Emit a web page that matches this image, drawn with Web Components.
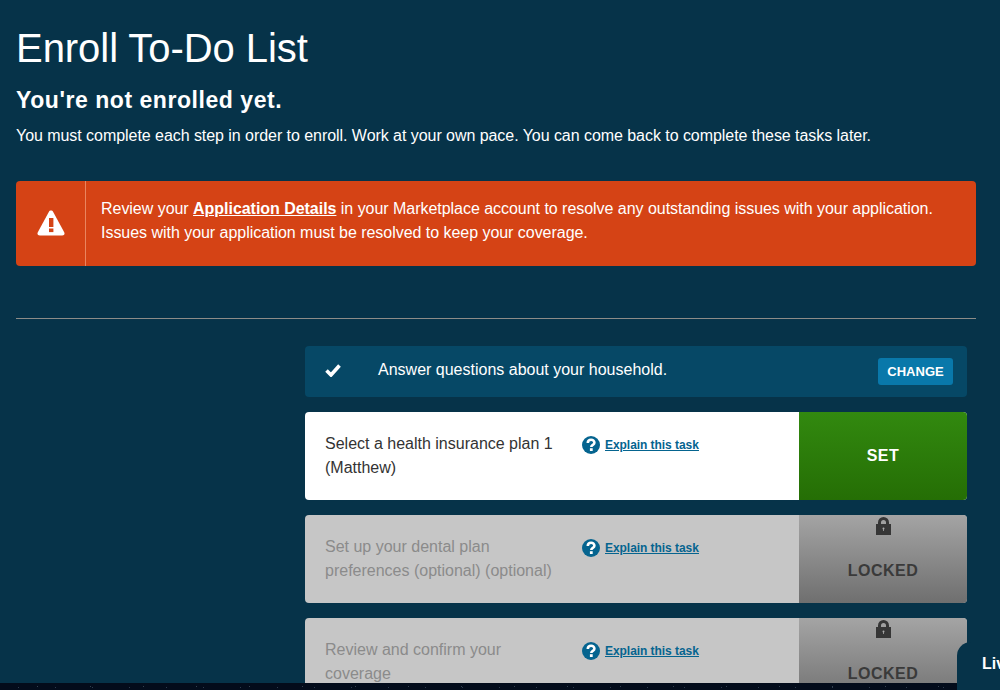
<!DOCTYPE html>
<html lang="en">
<head>
<meta charset="utf-8">
<title>Enroll To-Do List</title>
<style>
  html, body { margin: 0; height: 100%; overflow: hidden; background: #063349; }
  body { font-family: 'Liberation Sans', Arial, sans-serif; color: #fff; }
</style>
</head>
<body>
<enroll-page>
  <todo-row state="done" label="Answer questions about your household."></todo-row>
  <todo-row state="set" label="Select a health insurance plan 1 (Matthew)"></todo-row>
  <todo-row state="locked" label="Set up your dental plan preferences (optional) (optional)"></todo-row>
  <todo-row state="locked" label="Review and confirm your coverage"></todo-row>
</enroll-page>
<script>
// Alert banner
class AlertBanner extends HTMLElement {
  constructor() {
    super();
    this.attachShadow( {mode: 'open'} );
    this.shadowRoot.innerHTML = /* template */ `
      <style>
        :host {
          background: #d54315;
          border-radius: 4px;
          box-sizing: border-box;
          display: flex;
          height: 85px;
        }
        div[part=icon] {
          align-items: center;
          border-right: solid 1px #e9855f;
          box-sizing: border-box;
          display: flex;
          flex: none;
          justify-content: center;
          padding: 0 0 2px 0;
          width: 70px;
        }
        p {
          font-size: 16px;
          letter-spacing: -0.035px;
          line-height: 24px;
          margin: 0;
          padding: 16px 15px 0 15px;
        }
        ::slotted( a ) {
          color: #fff;
          font-weight: bold;
        }
      </style>
      <div part="icon">
        <svg width="28" height="26" viewBox="0 0 28 26">
          <path d="M14 0.5c1 0 1.700 .5 2.200 1.400l11 20.400c.9 1.700 -.1 3.200 -2 3.200H2.800c-1.900 0 -2.900 -1.500 -2 -3.200l11 -20.400C12.300 1 13 .5 14 .5z" fill="#fff"/>
          <rect x="12" y="8" width="4.400" height="9" fill="#d54315"/>
          <rect x="12" y="18.500" width="4.400" height="3.600" fill="#d54315"/>
        </svg>
      </div>
      <p><slot></slot></p>
    `;
  }
}
window.customElements.define( 'alert-banner', AlertBanner );

// One step of the to-do list
class TodoRow extends HTMLElement {
  constructor() {
    super();
    this.attachShadow( {mode: 'open'} );
    this.shadowRoot.innerHTML = /* template */ `
      <style>
        :host {
          border-radius: 4px;
          display: flex;
          flex: none;
          font-size: 16px;
          height: 88px;
          overflow: hidden;
        }
        :host( [state=done] ) {
          align-items: center;
          background: #064866;
          height: 51px;
        }
        :host( [state=set] ) {
          background: #fff;
          color: #333;
        }
        :host( [state=locked] ) {
          background: #c6c6c6;
          color: #8b8b8b;
        }
        svg[part=check] {
          margin: 0 0 3px 20px;
        }
        p {
          line-height: 24px;
          margin: 0;
        }
        :host( [state=done] ) p {
          flex-grow: 1;
          margin: 0 0 0 37px;
          padding: 0 0 4px 0;
        }
        :host( :not( [state=done] ) ) p {
          box-sizing: border-box;
          padding: 20px 22px 0 20px;
          width: 277px;
        }
        button {
          background: #0978aa;
          border: none;
          border-radius: 3px;
          color: #fff;
          font-family: inherit;
          font-size: 13px;
          font-weight: bold;
          height: 27px;
          margin: 0 14px 0 0;
          padding: 0;
          width: 75px;
        }
        a {
          align-items: flex-start;
          color: #05648f;
          display: flex;
          flex-grow: 1;
          font-size: 12px;
          font-weight: bold;
          gap: 5px;
          letter-spacing: -0.05px;
          line-height: 16px;
          padding: 24px 0 0 0;
        }
        a span {
          padding: 1px 0 0 0;
          text-decoration: underline;
        }
        div[part=action] {
          align-items: center;
          box-sizing: border-box;
          display: flex;
          flex-direction: column;
          font-weight: bold;
          height: 88px;
          letter-spacing: 0.5px;
          width: 168px;
        }
        :host( [state=set] ) div[part=action] {
          background: linear-gradient( #32890f, #256e05 );
          color: #fff;
          justify-content: center;
        }
        :host( [state=locked] ) div[part=action] {
          background: linear-gradient( #a4a4a4, #6f6f6f );
          color: #3a3a3a;
          padding: 2px 0 0 0;
        }
        div[part=action] svg {
          margin: 0 0 27px 0;
        }
      </style>
    `;
  }

  connectedCallback() {
    const state = this.getAttribute( 'state' );
    const label = this.getAttribute( 'label' );
    const root = this.shadowRoot;

    if( state === 'done' ) {
      root.innerHTML += `
        <svg part="check" width="16" height="14" viewBox="0 0 16 14">
          <path d="M1.500 7.500l4.500 4.500L14.500 2.500" fill="none" stroke="#fff" stroke-width="3.600"/>
        </svg>
        <p>${label}</p>
        <button>CHANGE</button>
      `;
      return;
    }

    const lock = `
      <svg width="15" height="18" viewBox="0 0 15 18">
        <path d="M2 7V5.500a5.500 5.500 0 0 1 11 0V7h2v11H0V7zM5 7h5V5.500a2.500 2.500 0 0 0 -5 0z" fill="#363636" fill-rule="evenodd"/>
        <circle cx="7.500" cy="11.500" r="1" fill="#aaa"/>
        <rect x="7.100" y="11.500" width="0.800" height="2.500" fill="#aaa"/>
      </svg>
    `;

    root.innerHTML += `
      <p>${label}</p>
      <a href="#">
        <svg width="18" height="18" viewBox="0 0 18 18">
          <circle cx="9" cy="9" r="9" fill="#05648f"/>
          <path d="M5.800 7c0 -4.200 6.600 -4.200 6.600 -.3c0 2.300 -3.100 2.100 -3.100 4.300" fill="none" stroke="#fff" stroke-width="2.600"/>
          <rect x="7.900" y="12.200" width="2.800" height="2.800" fill="#fff"/>
        </svg>
        <span>Explain this task</span>
      </a>
      <div part="action">
        ${state === 'locked' ? lock : ''}
        <span>${state === 'locked' ? 'LOCKED' : 'SET'}</span>
      </div>
    `;
  }
}
window.customElements.define( 'todo-row', TodoRow );

// Whole page
class EnrollPage extends HTMLElement {
  constructor() {
    super();
    this.attachShadow( {mode: 'open'} );
    this.shadowRoot.innerHTML = /* template */ `
      <style>
        :host {
          display: flex;
          flex-direction: column;
          height: 690px;
          overflow: hidden;
          position: relative;
        }
        main {
          background: #063349;
          box-sizing: border-box;
          flex-grow: 1;
          min-height: 0;
          overflow: hidden;
          padding: 27px 24px 0 16px;
        }
        h1 {
          font-size: 40px;
          font-weight: 400;
          letter-spacing: -0.05px;
          line-height: 42px;
          margin: 0;
        }
        h2 {
          font-size: 23px;
          font-weight: bold;
          letter-spacing: 0.55px;
          line-height: 28px;
          margin: 17px 0 0 0;
        }
        p {
          font-size: 16px;
          letter-spacing: -0.05px;
          line-height: 24px;
          margin: 10px 0 0 0;
        }
        alert-banner {
          margin: 33px 0 0 0;
        }
        hr {
          border: none;
          border-top: solid 1px #8c8c88;
          margin: 52px 0 0 0;
        }
        section {
          display: flex;
          flex-direction: column;
          gap: 15px;
          margin: 27px 9px 0 289px;
        }
        footer {
          background:
            radial-gradient( circle, #33414f 0, #33414f 0.6px, transparent 1px ) 11px 0 / 53px 7px,
            radial-gradient( circle, #2c3a4c 0, #2c3a4c 0.6px, transparent 1px ) 0 2px / 37px 5px,
            #030c1b;
          flex: none;
          height: 7px;
        }
        aside {
          background: #063349;
          border-radius: 14px 0 0 0;
          box-sizing: border-box;
          color: #fff;
          font-size: 16px;
          font-weight: bold;
          height: 48px;
          left: 957px;
          line-height: 43px;
          padding: 0 0 0 25px;
          position: absolute;
          top: 642px;
          white-space: nowrap;
          width: 100px;
        }
      </style>
      <main>
        <h1>Enroll To-Do List</h1>
        <h2>You're not enrolled yet.</h2>
        <p>You must complete each step in order to enroll. Work at your own pace. You can come back to complete these tasks later.</p>
        <alert-banner>Review your <a href="#">Application Details</a> in your Marketplace account to resolve any outstanding issues with your application. Issues with your application must be resolved to keep your coverage.</alert-banner>
        <hr>
        <section><slot></slot></section>
      </main>
      <footer></footer>
      <aside>Live chat</aside>
    `;
  }
}
window.customElements.define( 'enroll-page', EnrollPage );
</script>
</body>
</html>
